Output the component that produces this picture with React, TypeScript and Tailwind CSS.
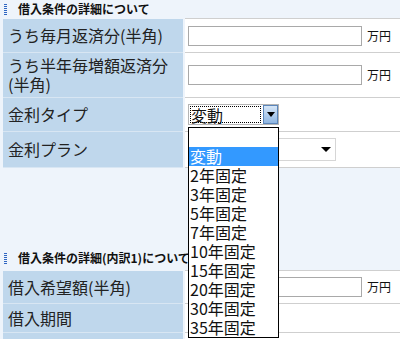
import React from "react";

const font = { fontFamily: '"Noto Sans CJK JP", "Noto Sans", sans-serif' };

function SectionTitle({ text }: { text: string }) {
  return (
    <div className="flex h-[18px] items-center pl-[4px]">
      <div className="h-[11px] w-[3px] bg-[repeating-linear-gradient(to_bottom,#2f66c2_0px,#2f66c2_1px,transparent_1px,transparent_2px)]" />
      <span className="ml-[11px] whitespace-nowrap text-[12px] font-bold leading-none text-[#111]">{text}</span>
    </div>
  );
}

function Row({ label, h, children }: { label: React.ReactNode; h: string; children?: React.ReactNode }) {
  return (
    <div className={`flex ${h}`}>
      <div className="flex w-[180px] items-center border-b border-[#d8e6f3] bg-[#bfd7ec] pl-[5px] text-[16px] leading-[19px] text-[#222]">
        {label}
      </div>
      <div className="ml-[2px] flex flex-1 items-center border-b border-[#cfcfcf] bg-white pl-[3px]">{children}</div>
    </div>
  );
}

function YenInput() {
  return (
    <div className="flex items-center">
      <div className="h-[20px] w-[174px] border border-[#a9a9a9] bg-white" />
      <span className="ml-[5px] text-[12px] text-[#111]">万円</span>
    </div>
  );
}

const options = ["", "変動", "2年固定", "3年固定", "5年固定", "7年固定", "10年固定", "15年固定", "20年固定", "30年固定", "35年固定"];

export default function App() {
  return (
    <div className="relative h-[339px] w-[400px] overflow-hidden bg-[#eef4fb]" style={font}>
      <SectionTitle text="借入条件の詳細について" />
      <div className="ml-[3px]">
        <div className="ml-[182px] border-t border-[#cfcfcf]" />
        <Row label="うち毎月返済分(半角)" h="h-[34px]">
          <YenInput />
        </Row>
        <Row
          label={
            <span>
              うち半年毎増額返済分
              <br />
              (半角)
            </span>
          }
          h="h-[45px]"
        >
          <YenInput />
        </Row>
        <Row label="金利タイプ" h="h-[34px]">
          <div className="flex h-[21px] w-[91px] items-center border border-[#b5b5b5] bg-white">
            <div className="ml-[1px] flex h-[17px] flex-1 items-center border border-dotted border-black text-[16px] leading-none text-[#111]">
              変動
            </div>
            <div className="ml-[2px] flex h-[19px] w-[15px] items-center justify-center border border-[#5b86bb] bg-[linear-gradient(to_bottom,#d6e6f7,#8fb6e2)]">
              <div className="h-0 w-0 border-x-[4px] border-t-[5px] border-x-transparent border-t-black" />
            </div>
          </div>
        </Row>
        <Row label="金利プラン" h="h-[36px]">
          <div className="flex h-[23px] w-[148px] items-center justify-end border border-[#d6d6d6] bg-white pr-[4px]">
            <div className="h-0 w-0 border-x-[5px] border-t-[5px] border-x-transparent border-t-black" />
          </div>
        </Row>
      </div>

      <div className="h-[81px]" />
      <SectionTitle text="借入条件の詳細(内訳1)について" />
      <div className="ml-[3px] mt-[3px]">
        <div className="ml-[182px] border-t border-[#cfcfcf]" />
        <Row label="借入希望額(半角)" h="h-[33px]">
          <YenInput />
        </Row>
        <Row label="借入期間" h="h-[29px]" />
        <Row label="" h="h-[30px]" />
      </div>

      <div className="absolute left-[188px] top-[127px] w-[91px] border border-black bg-white">
        {options.map((o, i) => (
          <div
            key={i}
            className={`h-[19px] whitespace-nowrap pl-[1px] text-[16px] leading-[19px] ${
              i === 1 ? "bg-[#3399ff] text-white" : "text-[#111]"
            }`}
          >
            {o}
          </div>
        ))}
      </div>
    </div>
  );
}
